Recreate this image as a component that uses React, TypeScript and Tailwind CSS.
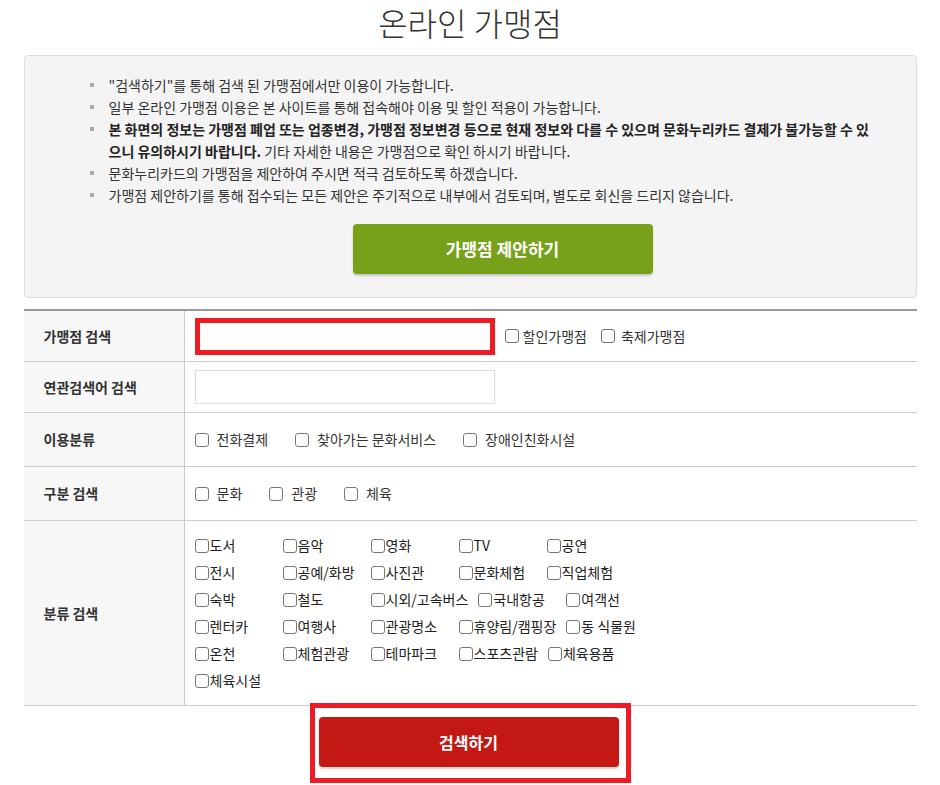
import type { ReactNode } from "react";

const notices: ReactNode[] = [
  <>"검색하기"를 통해 검색 된 가맹점에서만 이용이 가능합니다.</>,
  <>일부 온라인 가맹점 이용은 본 사이트를 통해 접속해야 이용 및 할인 적용이 가능합니다.</>,
  <>
    <strong className="font-bold text-[#222]">
      본 화면의 정보는 가맹점 폐업 또는 업종변경, 가맹점 정보변경 등으로 현재 정보와 다를 수 있으며 문화누리카드 결제가 불가능할 수 있으니 유의하시기 바랍니다.
    </strong>{" "}
    기타 자세한 내용은 가맹점으로 확인 하시기 바랍니다.
  </>,
  <>문화누리카드의 가맹점을 제안하여 주시면 적극 검토하도록 하겠습니다.</>,
  <>가맹점 제안하기를 통해 접수되는 모든 제안은 주기적으로 내부에서 검토되며, 별도로 회신을 드리지 않습니다.</>,
];

const categoryRows = [
  ["도서", "음악", "영화", "TV", "공연"],
  ["전시", "공예/화방", "사진관", "문화체험", "직업체험"],
  ["숙박", "철도", "시외/고속버스", "국내항공", "여객선"],
  ["렌터카", "여행사", "관광명소", "휴양림/캠핑장", "동 식물원"],
  ["온천", "체험관광", "테마파크", "스포츠관람", "체육용품"],
  ["체육시설"],
];

const CheckBox = () => (
  <input
    type="checkbox"
    className="appearance-none w-[14px] h-[14px] shrink-0 border border-[#767676] rounded-[3px] bg-white"
  />
);

const Row = ({
  label,
  height,
  children,
}: {
  label: string;
  height: string;
  children: ReactNode;
}) => (
  <div className={`flex border-b border-[#ccc] ${height}`}>
    <div className="w-[161px] shrink-0 bg-[#f7f7f7] border-r border-[#ccc] flex items-center pl-[20px] text-[14px] font-bold text-[#333]">
      {label}
    </div>
    <div className="flex-1 flex items-center pl-[10px]">{children}</div>
  </div>
);

export default function App() {
  return (
    <div className="w-[940px] bg-white font-['Noto_Sans_CJK_KR','Noto_Sans',sans-serif] text-[#333]">
      <h1 className="text-center text-[32px] leading-[44px] font-light text-[#333]">
        온라인 가맹점
      </h1>

      <div className="w-[893px] mx-auto">
        {/* Notice box */}
        <div className="mt-[11px] bg-[#f4f4f4] border border-[#ddd] rounded-[4px] pt-[18px] pb-[23px]">
          <ul className="pl-[65px] pr-[36px] text-[14px] leading-[22px]">
            {notices.map((n, i) => (
              <li key={i} className="flex">
                <span className="w-[19px] h-[22px] flex items-center shrink-0">
                  <span className="w-[4px] h-[4px] bg-[#aaa]" />
                </span>
                <span>{n}</span>
              </li>
            ))}
          </ul>
          <div className="pl-[85px] pr-[20px] mt-[18px] flex justify-center">
            <button className="w-[300px] h-[50px] rounded-[4px] bg-[#78a11b] text-white text-[17px] font-bold shadow-[0_2px_2px_rgba(0,0,0,0.18)]">
              가맹점 제안하기
            </button>
          </div>
        </div>

        {/* Search table */}
        <div className="mt-[11px] border-t-2 border-[#999]">
          <Row label="가맹점 검색" height="h-[51px]">
            <div className="w-[300px] h-[37px] border-[5px] border-[#ed1c24] bg-white" />
            <label className="flex items-center ml-[10px] text-[14px]">
              <CheckBox />
              <span className="ml-[4px]">할인가맹점</span>
            </label>
            <label className="flex items-center ml-[14px] text-[14px]">
              <CheckBox />
              <span className="ml-[6px]">축제가맹점</span>
            </label>
          </Row>
          <Row label="연관검색어 검색" height="h-[51px]">
            <input className="w-[300px] h-[34px] border border-[#ddd] bg-white outline-none" />
          </Row>
          <Row label="이용분류" height="h-[54px]">
            {["전화결제", "찾아가는 문화서비스", "장애인친화시설"].map((t) => (
              <label key={t} className="flex items-center mr-[27px] text-[14px]">
                <CheckBox />
                <span className="ml-[8px]">{t}</span>
              </label>
            ))}
          </Row>
          <Row label="구분 검색" height="h-[54px]">
            {["문화", "관광", "체육"].map((t) => (
              <label key={t} className="flex items-center mr-[27px] text-[14px]">
                <CheckBox />
                <span className="ml-[8px]">{t}</span>
              </label>
            ))}
          </Row>
          <Row label="분류 검색" height="h-[185px]">
            <div className="flex flex-col self-stretch pt-[11px]">
              {categoryRows.map((row, i) => (
                <div key={i} className="flex h-[27px] items-center">
                  {row.map((t) => (
                    <label key={t} className="flex items-center min-w-[78px] mr-[10px] text-[14px] text-[#222]">
                      <CheckBox />
                      <span className="ml-[1px]">{t}</span>
                    </label>
                  ))}
                </div>
              ))}
            </div>
          </Row>
        </div>

        {/* Search button */}
        <div className="flex justify-center -mt-[3px]">
          <div className="border-[5px] border-[#ed1c24] pl-[4px] pr-[7px] pt-[9px] pb-[11px]">
            <button className="w-[300px] h-[50px] rounded-[4px] bg-[#c31813] text-white text-[16px] font-bold shadow-[0_2px_2px_rgba(0,0,0,0.18)]">
              검색하기
            </button>
          </div>
        </div>
      </div>
    </div>
  );
}
